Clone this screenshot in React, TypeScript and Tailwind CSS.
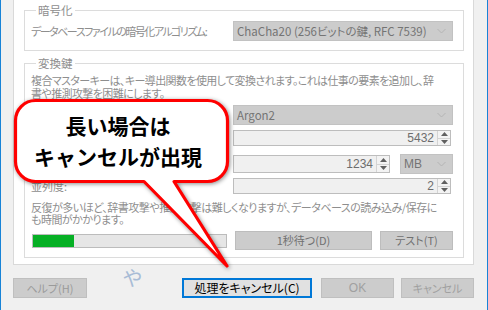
import React from "react";

const Chevron = () => (
  <svg width="9" height="6" viewBox="0 0 9 6" className="shrink-0">
    <polyline points="0.5,1 4.5,5 8.5,1" fill="none" stroke="#b4b4b4" strokeWidth="1" />
  </svg>
);

const Combo = ({ text, w }: { text: string; w: string }) => (
  <div className={`flex h-[20px] ${w} items-center justify-between border border-[#c2c2c2] bg-[#cccccc] pl-[3px] pr-[6px] text-[11.5px] leading-[18px] text-[#747474] whitespace-nowrap`}>
    <span>{text}</span>
    <Chevron />
  </div>
);

const Spinner = () => (
  <div className="flex w-[13px] flex-col border-l border-[#d4d4d4]">
    <div className="flex flex-1 items-center justify-center border-b border-[#d4d4d4] bg-[#f3f3f3]">
      <svg width="7" height="4" viewBox="0 0 7 4">
        <polygon points="3.5,0 7,4 0,4" fill="#606060" />
      </svg>
    </div>
    <div className="flex flex-1 items-center justify-center bg-[#f3f3f3]">
      <svg width="7" height="4" viewBox="0 0 7 4">
        <polygon points="0,0 7,0 3.5,4" fill="#606060" />
      </svg>
    </div>
  </div>
);

const Spin = ({ value, cls }: { value: string; cls: string }) => (
  <div className={`flex ${cls} border border-[#bdbdbd] bg-[#f0f0f0]`}>
    <div className="flex flex-1 items-center justify-end pr-[3px] text-[12px] text-[#6d6d6d] [font-family:'Liberation_Sans',sans-serif]">
      {value}
    </div>
    <Spinner />
  </div>
);

export default function App() {
  const label = "text-[#8e8e8e]";
  return (
    <div className="relative h-[310px] w-[488px] overflow-hidden border-x border-[#1883d7] bg-[#f0f0f0] text-[11px] [font-family:'Noto_Sans_CJK_JP',sans-serif] [font-feature-settings:'palt']">
      {/* tab panel */}
      <div className="ml-[12px] w-[461px] border-x border-b border-[#d9d9d9] bg-white pl-[10px] pr-[9px] pt-[3px] pb-[6px]">
        <fieldset className="m-0 min-w-0 border border-[#dcdcdc] pl-[6px] pr-[9px] pt-[4px] pb-[9px]">
          <legend className={`ml-[5px] px-[2px] text-[11.5px] leading-[14px] ${label}`}>暗号化</legend>
          <div className="flex h-[20px] items-center">
            <div className={`w-[202px] whitespace-nowrap leading-[14px] tracking-[-1.5px] ${label}`}>データベースファイルの暗号化アルゴリズム:</div>
            <Combo text="ChaCha20 (256ビットの鍵, RFC 7539)" w="w-[220px]" />
          </div>
        </fieldset>

        <fieldset className="m-0 mt-[5px] min-w-0 border border-[#dcdcdc] pl-[6px] pr-[9px] pt-[4px] pb-[7px]">
          <legend className={`ml-[5px] px-[2px] text-[11.5px] leading-[14px] ${label}`}>変換鍵</legend>
          <div className={`whitespace-nowrap leading-[12.5px] tracking-[-0.6px] ${label}`}>
            <div>複合マスターキーは、キー導出関数を使用して変換されます。これは仕事の要素を追加し、辞</div>
            <div>書や推測攻撃を困難にします。</div>
          </div>
          <div className="mt-[6px] flex h-[20px] items-center">
            <div className="w-[202px]" />
            <Combo text="Argon2" w="w-[220px]" />
          </div>
          <div className="mt-[5px] flex h-[16px] items-center">
            <div className="w-[202px]" />
            <Spin value="5432" cls="h-[16px] w-[218px]" />
          </div>
          <div className="mt-[8px] flex h-[20px] items-center">
            <div className="w-[202px]" />
            <Spin value="1234" cls="h-[18px] w-[157px]" />
            <div className="ml-[10px]">
              <div className="flex h-[20px] w-[53px] items-center justify-between border border-[#c2c2c2] bg-[#cccccc] pl-[3px] pr-[6px] text-[12px] text-[#747474] [font-family:'Liberation_Sans',sans-serif]">
                <span>MB</span>
                <Chevron />
              </div>
            </div>
          </div>
          <div className="mt-[4px] flex h-[16px] items-center">
            <div className={`w-[202px] leading-[14px] ${label}`}>並列度:</div>
            <Spin value="2" cls="h-[16px] w-[218px]" />
          </div>
          <div className={`mt-[7px] whitespace-nowrap leading-[12px] tracking-[-0.5px] ${label}`}>
            <div>反復が多いほど、辞書攻撃や推測攻撃は難しくなりますが、データベースの読み込み/保存に</div>
            <div>も時間がかかります。</div>
          </div>
          <div className="mt-[6px] flex h-[19px] items-center">
            <div className="ml-[1px] h-[14px] w-[195px] border border-[#bcbcbc] bg-[#e6e6e6]">
              <div className="h-full w-[41px] bg-[#06b025]" />
            </div>
            <div className="ml-[8px] flex h-[19px] w-[137px] items-center justify-center border border-[#bdbdbd] bg-[#cccccc] text-[#707070]">
              1秒待つ(D)
            </div>
            <div className="ml-[8px] flex h-[19px] w-[73px] items-center justify-center border border-[#bdbdbd] bg-[#cccccc] text-[#707070]">
              テスト(T)
            </div>
          </div>
        </fieldset>
      </div>

      {/* bottom buttons */}
      <div className="mt-[13px] flex h-[20px] pl-[12px]">
        <div className="flex w-[74px] items-center justify-center border border-[#bfbfbf] bg-[#cccccc] text-[#9a9a9a]">ヘルプ(H)</div>
        <div className="ml-[95px] flex w-[130px] items-center justify-center border-2 border-[#0078d7] bg-[#e1e1e1] text-[12px] text-black">処理をキャンセル(C)</div>
        <div className="ml-[9px] flex w-[73px] items-center justify-center border border-[#bfbfbf] bg-[#cccccc] text-[12px] text-[#a0a0a0] [font-family:'Liberation_Sans',sans-serif]">OK</div>
        <div className="ml-[7px] flex w-[73px] items-center justify-center border border-[#bfbfbf] bg-[#cccccc] text-[#a0a0a0]">キャンセル</div>
      </div>

      {/* watermark */}
      <div className="absolute left-[122px] top-[266px] text-[20px] leading-[24px] text-[#a8bcd6]">や</div>

      {/* callout */}
      <svg className="pointer-events-none absolute left-0 top-0 drop-shadow-[1px_1px_2px_rgba(0,0,0,0.45)]" width="488" height="310" viewBox="0 0 488 310">
        <path
          d="M 34.5 100.5 H 206.5 A 20 20 0 0 1 226.5 120.5 V 161.5 A 20 20 0 0 1 206.5 181.5 H 173 L 226 266 L 143 181.5 H 34.5 A 20 20 0 0 1 14.5 161.5 V 120.5 A 20 20 0 0 1 34.5 100.5 Z"
          fill="#ffffff"
          stroke="#ff0000"
          strokeWidth="3.2"
          strokeLinejoin="round"
        />
      </svg>
      <div className="pointer-events-none absolute left-[13px] top-[110px] w-[208px] text-center text-[21px] font-bold leading-[31px] text-black [font-feature-settings:normal]">
        <div>長い場合は</div>
        <div>キャンセルが出現</div>
      </div>
    </div>
  );
}
